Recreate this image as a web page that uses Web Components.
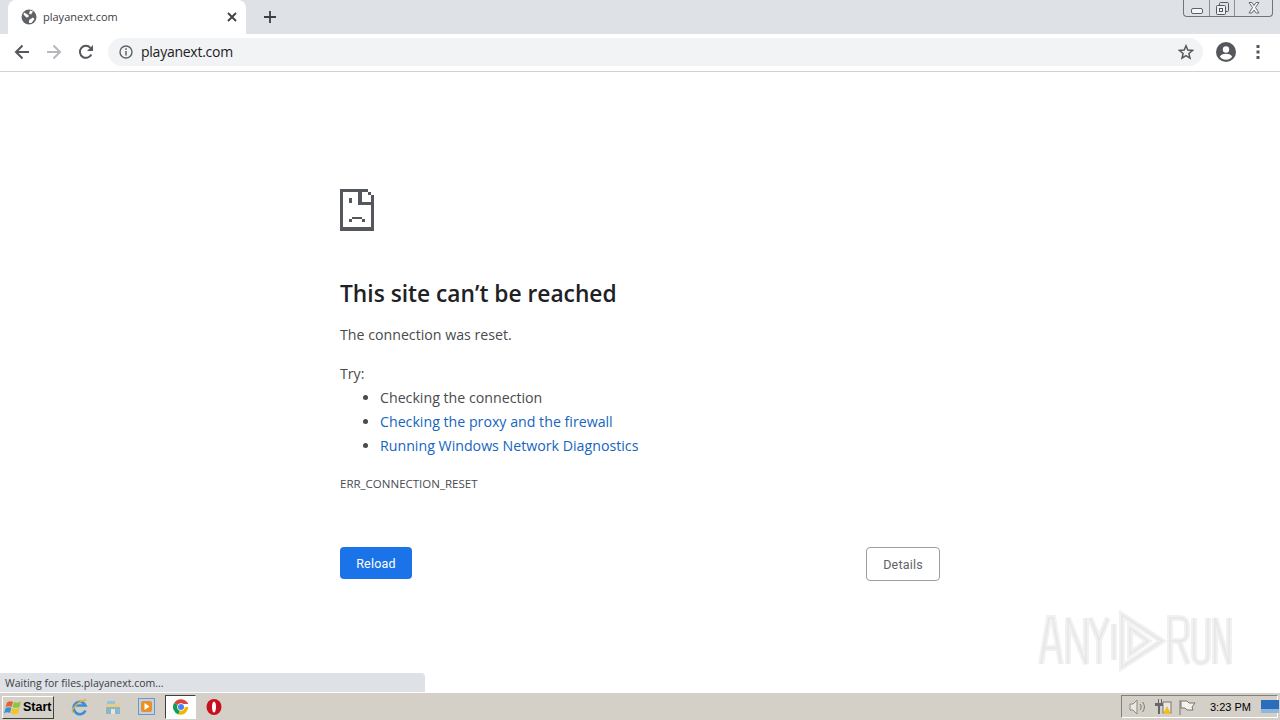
<!DOCTYPE html>
<html>
<head>
<meta charset="utf-8">
<title>playanext.com</title>
<style>
    html, body { margin: 0; height: 100%; overflow: hidden; background: #fff; }
    body { display: flex; flex-direction: column; height: 720px; font-family: "Open Sans", "Liberation Sans", sans-serif; }
</style>
</head>
<body>
<tab-strip></tab-strip>
<tool-bar></tool-bar>
<error-page></error-page>
<task-bar></task-bar>

<script>
    class TabStrip extends HTMLElement {
        constructor() {
            super()
            this.attachShadow({ mode: 'open' }).innerHTML = `
            <style>
                :host { display: flex; height: 34px; background: #dee1e6; flex: none; }
                #tab { width: 238px; height: 34px; margin-left: 8px; padding: 0 8px 0 13px; box-sizing: border-box; background: #fff; border-radius: 8px 8px 0 0; display: flex; align-items: center; }
                #title { margin: -1px 0 0 6px; font: 11px "Open Sans", sans-serif; color: #3c4043; flex: 1; }
                #plus { margin: 0 0 0 18px; width: 16px; height: 34px; display: flex; align-items: center; }
                #win { margin-left: auto; margin-right: 7px; width: 90px; height: 17px; box-sizing: border-box; border: 1px solid #70757c; border-top: none; border-radius: 0 0 4px 4px; display: flex; }
                #win div { display: flex; align-items: center; justify-content: center; border-right: 1px solid #8a8f96; }
                #win div:last-child { border-right: none; }
                svg { display: block; flex: none; }
            </style>
            <div id=tab>
                <svg width=16 height=16 viewBox="0 0 16 16"><circle cx=8 cy=8 r=7.500 fill="#5f6368"/><path d="M3 3.500 7.500 6v2l-2 .5-3-3zM9 1.500l3 1-2 3-2-1zM8 11l4-2.500 1.500 1.500-3 4H8z" fill="#fff"/></svg>
                <span id=title>playanext.com</span>
                <svg width=12 height=12 viewBox="0 0 12 12"><path d="M2 2l8 8M10 2l-8 8" stroke="#3c4043" stroke-width="1.800"/></svg>
            </div>
            <div id=plus><svg width=12 height=12 viewBox="0 0 12 12"><path d="M6 0v12M0 6h12" stroke="#3c4043" stroke-width="1.800"/></svg></div>
            <div id=win>
                <div style="width:25px"><svg width=14 height=8 viewBox="0 0 14 8" style="margin-top:6px"><rect x=1.500 y=1.500 width=11 height=5 rx=1.500 fill="#f4f6f8" stroke="#5f6368"/></svg></div>
                <div style="width:24px"><svg width=13 height=13 viewBox="0 0 13 13"><rect x=3.500 y=.5 width=9 height=9 rx=1 fill="#dee1e6" stroke="#55595e"/><rect x=.5 y=3.500 width=9 height=9 rx=1 fill="#eef0f2" stroke="#55595e"/><rect x=3.500 y=6.500 width=3 height=3 fill="none" stroke="#55595e"/></svg></div>
                <div style="flex:1"><svg width=14 height=12 viewBox="0 0 14 12"><path d="M2 .5h3l2 3 2-3h3l-3.500 5 3.500 5.500H9L7 8l-2 3H2l3.500-5.500z" fill="#f4f6f8" stroke="#6a6e74"/></svg></div>
            </div>`
        }
    }
    customElements.define('tab-strip', TabStrip)

    class ToolBar extends HTMLElement {
        constructor() {
            super()
            this.attachShadow({ mode: 'open' }).innerHTML = `
            <style>
                :host { display: flex; align-items: center; padding-bottom: 2px; box-sizing: border-box; height: 38px; border-bottom: 1px solid #d0d2d5; flex: none; background: #fff; }
                svg { display: block; flex: none; }
                #nav { display: flex; align-items: center; gap: 16px; margin-left: 14px; }
                #omni { margin-left: 14px; width: 1095px; height: 28px; background: #f1f3f4; border-radius: 14px; display: flex; align-items: center; padding: 0 9px 0 11px; box-sizing: border-box; }
                #url { margin-left: 8px; font: 14px "Open Sans", sans-serif; color: #202124; flex: 1; letter-spacing: -.25px; }
                #right { display: flex; align-items: center; margin-left: 13px; gap: 20px; }
            </style>
            <div id=nav>
                <svg width=16 height=16 viewBox="0 0 16 16"><path d="M15 8H2M8.500 1.500 2 8l6.500 6.500" fill="none" stroke="#54585d" stroke-width="2"/></svg>
                <svg width=16 height=16 viewBox="0 0 16 16"><path d="M1 8h13M7.500 1.500 14 8l-6.500 6.500" fill="none" stroke="#b5b8bc" stroke-width="2"/></svg>
                <svg width=16 height=16 viewBox="0 0 16 16"><path d="M13.300 10.500A6 6 0 1 1 12.400 3.800" fill="none" stroke="#54585d" stroke-width="2"/><path d="M15 1v6H9z" fill="#54585d"/></svg>
            </div>
            <div id=omni>
                <svg width=14 height=14 viewBox="0 0 14 14"><circle cx=7 cy=7 r=6 fill="none" stroke="#5f6368" stroke-width="1.400"/><path d="M7 6v4.500" stroke="#5f6368" stroke-width="1.500"/><rect x=6.200 y=3.300 width=1.600 height=1.600 fill="#5f6368"/></svg>
                <span id=url>playanext.com</span>
                <svg width=16 height=16 viewBox="0 0 16 16"><path d="M8 1.800l1.800 4.300 4.700.4-3.600 3 1.100 4.600L8 11.700l-4 2.400 1.100-4.600-3.600-3 4.700-.4z" fill="none" stroke="#54585d" stroke-width="1.500"/></svg>
            </div>
            <div id=right>
                <svg width=20 height=20 viewBox="0 0 20 20"><circle cx=10 cy=10 r=10 fill="#54585d"/><circle cx=10 cy=7.500 r=3.200 fill="#fff"/><path d="M3.800 14.500C5 12.300 7.800 11.700 10 11.700s5 .6 6.200 2.800A7.700 7.700 0 0 1 10 17.800a7.700 7.700 0 0 1-6.200-3.300z" fill="#fff"/></svg>
                <svg width=4 height=14 viewBox="0 0 4 14"><rect x=.5 width=3 height=3 fill="#54585d"/><rect x=.5 y=5.500 width=3 height=3 fill="#54585d"/><rect x=.5 y=11 width=3 height=3 fill="#54585d"/></svg>
            </div>`
        }
    }
    customElements.define('tool-bar', ToolBar)

    class ErrorPage extends HTMLElement {
        constructor() {
            super()
            this.attachShadow({ mode: 'open' }).innerHTML = `
            <style>
                :host { display: block; position: relative; flex: 1; min-height: 0; background: #fff; color: #484b4f; font: 14.200px/24px "Open Sans", sans-serif; }
                main { width: 600px; margin-left: 340px; padding-top: 117px; box-sizing: border-box; }
                #icon { display: block; }
                h1 { margin: 47px 0 0; font: 600 22.750px/32px "Open Sans", sans-serif; color: #202124; }
                p { margin: 0; }
                #msg { margin-top: 13px; }
                #try { margin-top: 15px; }
                ul { margin: 0; padding-left: 40px; }
                a { color: #1565c0; text-decoration: none; }
                #code { margin-top: 18px; font-size: 11.500px; line-height: 16px; color: #484b4f; }
                #btns { display: flex; justify-content: space-between; align-items: flex-start; margin-top: 55px; }
                .btn { font: 12.500px "Roboto", sans-serif; border-radius: 4px; box-sizing: border-box; display: flex; align-items: center; justify-content: center; letter-spacing: .2px; }
                #reload { width: 72px; height: 32px; background: #1a73e8; color: #fff; }
                #details { width: 74px; height: 34px; border: 1px solid #9a9da1; color: #5f6368; }
                #status { position: absolute; left: 0; bottom: 0; width: 425px; height: 19px; background: #dee1e6; border-radius: 0 4px 0 0; font: 10.500px/20px "Open Sans", sans-serif; color: #3c4043; padding-left: 5px; box-sizing: border-box; }
                #mark { position: absolute; left: 1038px; top: 538px; }
                #mark .wide { stroke: #f1f1f1; stroke-width: 6px; }
                #mark .thin { stroke: #e6e6e6; stroke-width: 1.500px; }
            </style>
            <main>
                <svg id=icon width=34 height=42 viewBox="0 0 34 42" shape-rendering="crispEdges" fill="#54585d">
                    <rect width=3 height=42 />
                    <rect y=38 width=34 height=4 />
                    <rect x=31 y=6 width=3 height=36 />
                    <rect width=25 height=3 />
                    <rect x=25 width=3 height=3 />
                    <rect x=28 y=3 width=3 height=3 />
                    <rect x=18 width=4 height=16 />
                    <rect x=18 y=13 width=16 height=3 />
                    <rect x=9 y=9 width=3 height=5 />
                    <rect x=12 y=28 width=10 height=2 />
                    <rect x=9 y=30 width=3 height=3 />
                    <rect x=22 y=30 width=3 height=3 />
                </svg>
                <h1>This site can’t be reached</h1>
                <p id=msg>The connection was reset.</p>
                <p id=try>Try:</p>
                <ul>
                    <li>Checking the connection</li>
                    <li><a>Checking the proxy and the firewall</a></li>
                    <li><a>Running Windows Network Diagnostics</a></li>
                </ul>
                <p id=code>ERR_CONNECTION_RESET</p>
                <div id=btns>
                    <div class=btn id=reload>Reload</div>
                    <div class=btn id=details>Details</div>
                </div>
            </main>
            <div id=status>Waiting for files.playanext.com...</div>
            <svg id=mark width=194 height=62 viewBox="0 0 194 62" fill="none">
                <g class=wide>
                    <path d="M3 54 11 8h4l8 46M6 38h14M30 54V8l18 46V8M52 8l9 22 9-22M61 30v24"/>
                    <path d="M76 14v36M84 5l40 26-40 26zM92 18l18 13-18 13z"/>
                    <path d="M132 54V8h10a7 7 0 0 1 7 7v9a7 7 0 0 1-7 7h-10M141 31l9 23M156 8v38a7 7 0 0 0 14 0V8M177 54V8l14 46V8"/>
                </g>
                <g class=thin>
                    <path d="M3 54 11 8h4l8 46M6 38h14M30 54V8l18 46V8M52 8l9 22 9-22M61 30v24"/>
                    <path d="M76 14v36M84 5l40 26-40 26zM92 18l18 13-18 13z"/>
                    <path d="M132 54V8h10a7 7 0 0 1 7 7v9a7 7 0 0 1-7 7h-10M141 31l9 23M156 8v38a7 7 0 0 0 14 0V8M177 54V8l14 46V8"/>
                </g>
            </svg>`
        }
    }
    customElements.define('error-page', ErrorPage)

    class TaskBar extends HTMLElement {
        constructor() {
            super()
            this.attachShadow({ mode: 'open' }).innerHTML = `
            <style>
                :host { display: flex; align-items: center; height: 28px; box-sizing: border-box; background: #d4d0c8; border-top: 1px solid #fff; flex: none; }
                svg { display: block; flex: none; }
                #start { margin: 1px 0 0 2px; width: 52px; height: 23px; box-sizing: border-box; border: 1px solid; border-color: #fff #404040 #404040 #fff; background: #d4d0c8; display: flex; align-items: center; padding-left: 1px; font: 700 12.500px "Liberation Sans", sans-serif; color: #000; }
                #quick { display: flex; align-items: center; margin-left: 17px; gap: 17px; }
                #chrome { width: 31px; height: 24px; box-sizing: border-box; border: 1px solid; border-color: #404040 #fff #fff #404040; background: #fff; display: flex; align-items: center; justify-content: center; margin: 0 -7px; }
                #tray { margin-left: auto; margin-right: 2px; width: 157px; height: 23px; box-sizing: border-box; border: 1px solid; border-color: #808080 #fff #fff #808080; display: flex; align-items: center; padding-left: 7px; }
                #clock { font: 11px "Liberation Sans", sans-serif; color: #000; margin-left: 14px; white-space: nowrap; }
            </style>
            <div id=start>
                <svg width=19 height=17 viewBox="0 0 19 17"><path d="M3 3.500C5 2 7 2 9 3L7.500 8C5.500 7 3.500 7 1.500 8.500z" fill="#e8602c"/><path d="M10 3c2 1 4 1 7-.5L15.500 8c-2.500 1.200-4.500 1-7 .2z" fill="#8cc63f"/><path d="M1.300 9.500c2-1.300 4-1.500 6-.5L6 14c-2-1-4-.8-6 .5z" fill="#3a8fd8"/><path d="M8.200 9.300c2.500.8 4.500 1 7-.2L14 14.300c-2.500 1.200-4.500 1.200-7 .3z" fill="#f6c21c"/></svg>
                <span>Start</span>
            </div>
            <div id=quick>
                <svg width=17 height=18 viewBox="0 0 17 18"><path d="M14.500 12.500A6.200 6.200 0 1 1 14.500 7.500H5" fill="none" stroke="#3a8fd8" stroke-width="2.600"/><path d="M1.500 15C0 11 9 1.500 15.500 2" fill="none" stroke="#e2b33c" stroke-width="1.300"/></svg>
                <svg width=16 height=16 viewBox="0 0 16 16"><path d="M1 4h14v11H1z" fill="#e4cf8a"/><path d="M2 2h8v3H2z" fill="#8fc6dc"/><path d="M1 8h14v7H1z" fill="#8ab6c8"/><rect x=6 y=10 width=4 height=5 fill="#e8e4d8"/></svg>
                <svg width=17 height=17 viewBox="0 0 17 17"><rect x=.5 y=.5 width=16 height=16 fill="#bcd3ea" stroke="#6f97c2"/><rect x=3 y=3 width=11 height=11 rx=2 fill="#ee8f22"/><path d="M6.500 5l5 3.500-5 3.500z" fill="#fff"/></svg>
                <div id=chrome>
                    <svg width=16 height=16 viewBox="0 0 16 16"><path d="M8 8 1.100 4A8 8 0 0 1 15.300 5H8z" fill="#db4437"/><path d="M8 8 1.100 4A8 8 0 0 0 5.500 15.600z" fill="#0f9d58"/><path d="M8 8H15.300A8 8 0 0 1 5.500 15.600z" fill="#f4b400"/><circle cx=8 cy=8 r=3.800 fill="#fff"/><circle cx=8 cy=8 r=3 fill="#4285f4"/></svg>
                </div>
                <svg width=16 height=18 viewBox="0 0 16 18"><ellipse cx=8 cy=9 rx=7.500 ry=8 fill="#c8101c"/><ellipse cx=8 cy=9 rx=2 ry=5.500 fill="#fff"/></svg>
            </div>
            <div id=tray>
                <svg width=18 height=16 viewBox="0 0 18 16"><path d="M1 5h3l4-4v14l-4-4H1z" fill="#e8e8e4" stroke="#8a8a86"/><path d="M11 5c1.500 2 1.500 4 0 6M13.500 3c2.500 3 2.500 7 0 10" fill="none" stroke="#77776f"/></svg>
                <svg width=18 height=18 viewBox="0 0 18 18" style="margin-left:7px"><path d="M1 5h3V1h1v4h2V1h1v4h1v3H6v8H4V8H1z" fill="#666"/><rect x=9 y=4 width=8 height=11 fill="#e8e8e4" stroke="#77776f"/><path d="M13 8l4 8H9z" fill="#f0c020"/></svg>
                <svg width=18 height=16 viewBox="0 0 18 16" style="margin-left:6px"><path d="M2 1v15" stroke="#77776f"/><path d="M3 2h6l2 2h6l-3 4 1 3H9L7 9H3z" fill="#f2f2ee" stroke="#77776f"/></svg>
                <span id=clock>3:23 PM</span>
                <svg width=18 height=13 viewBox="0 0 18 13" style="margin-left:10px"><rect width=18 height=13 fill="#2a6ebb"/><rect y=9 width=18 height=4 fill="#8fb6dc"/></svg>
            </div>`
        }
    }
    customElements.define('task-bar', TaskBar)
</script>
</body>
</html>
